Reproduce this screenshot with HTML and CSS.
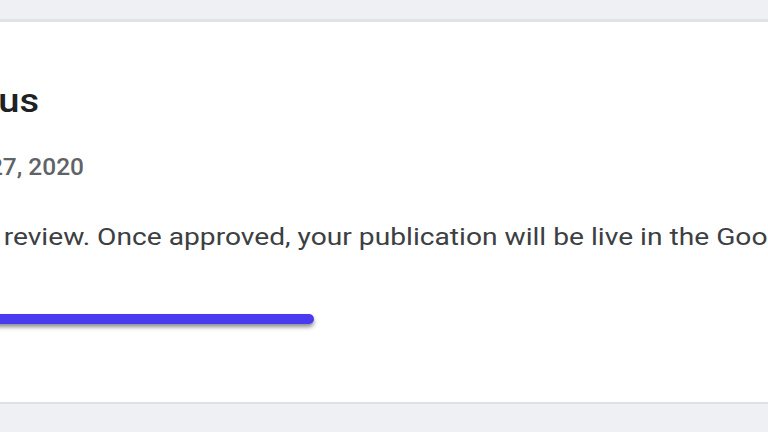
FILE: index.html
```html
<!DOCTYPE html>
<html lang="en">
<head>
<meta charset="utf-8">
<title>Publication status</title>
<link rel="stylesheet" href="styles.css">
</head>
<body>
<main class="page">
  <section class="card">
    <div class="content">
      <h1 class="title-row"><span>Publication status</span></h1>
      <p class="date-row"><span>Submitted on Aug 27, 2020</span></p>
      <p class="body-row"><span class="prefix"><span>Your publication is in</span></span><span class="rest">review. Once approved, your publication will be live in the Google Play Store.</span></p>
      <div class="progress"></div>
    </div>
  </section>
</main>
</body>
</html>
```
FILE: styles.css
```css
* { box-sizing: border-box; }
html, body { margin: 0; padding: 0; }
body {
  background: #eff0f4;
  font-family: Roboto, "Liberation Sans", Arial, sans-serif;
  width: 768px;
  height: 432px;
  overflow: hidden;
}
.page {
  padding-top: 19px;
}
.card {
  background: #ffffff;
  border-top: 3px solid #e1e2e6;
  border-bottom: 2px solid #dfe0e4;
  overflow: hidden;
  padding: 58px 0 78px 0;
}
.content {
  display: flex;
  flex-direction: column;
  align-items: flex-start;
}
.title-row {
  margin: 0;
  width: 39px;
  display: flex;
  justify-content: flex-end;
  white-space: nowrap;
  font-size: 34px;
  line-height: 40px;
  font-weight: 500;
  color: #202124;
  transform: scaleX(1.12);
  transform-origin: right center;
}
.date-row {
  margin: 33px 0 0 0;
  width: 84px;
  display: flex;
  justify-content: flex-end;
  white-space: nowrap;
  font-size: 24px;
  line-height: 28px;
  font-weight: 500;
  color: #5f6368;
  transform: scaleX(1.02);
  transform-origin: right center;
}
.body-row {
  margin: 42px 0 0 0;
  display: flex;
  white-space: nowrap;
  font-size: 23px;
  line-height: 30px;
  color: #3c4043;
  transform: scaleX(1.225);
  transform-origin: left center;
}
.prefix {
  width: 0;
  display: flex;
  justify-content: flex-end;
  margin-right: 3px;
}
.progress {
  margin: 61px 0 0 -10px;
  width: 324px;
  height: 10px;
  border-radius: 5px;
  background: #4b3bf0;
  box-shadow: 0 3px 4px rgba(0, 0, 0, 0.45);
}
```
